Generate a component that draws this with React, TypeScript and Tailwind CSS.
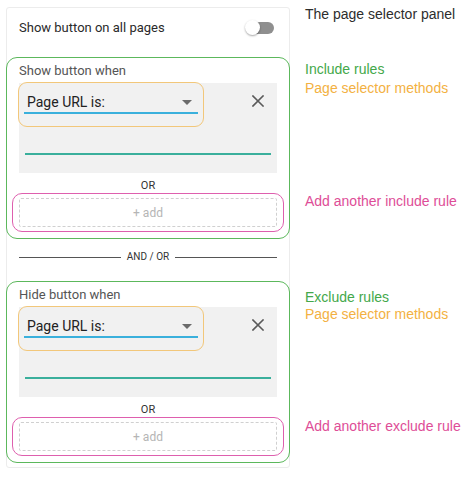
import React from "react";

const ui = { fontFamily: "Roboto, 'Liberation Sans', sans-serif" };
const lab = { fontFamily: "'Liberation Sans', Arial, sans-serif" };

function Caret() {
  return (
    <svg width="10" height="5" viewBox="0 0 10 5" className="shrink-0">
      <path d="M0 0 L10 0 L5 5 Z" fill="#6b6b6b" />
    </svg>
  );
}

function XIcon() {
  return (
    <svg width="12" height="12" viewBox="0 0 12 12">
      <path d="M1 1 L11 11 M11 1 L1 11" stroke="#5a5a5a" strokeWidth="1.6" strokeLinecap="square" />
    </svg>
  );
}

function RuleGroup({ title }: { title: string }) {
  return (
    <div className="-mx-px rounded-[11px] border-[1.5px] border-[#5cb85c] pt-[5px] pb-[6px]">
      <div className="pl-[12px] text-[13px] leading-[16px] text-[#555]">{title}</div>
      <div className="mx-[12px] mt-[4px] h-[90px] bg-[#f1f1f1] flex flex-col">
        <div className="flex items-start">
          <div className="-ml-px -mt-px w-[186px] h-[45px] rounded-[9px] border-[1.5px] border-[#f2c77a] px-[5px] pt-[9px]">
            <div className="flex items-center justify-between h-[20px] pl-[3px] pr-[6px]">
              <span className="text-[14px] text-[#222]">Page URL is:</span>
              <Caret />
            </div>
            <div className="h-[2px] bg-[#3ab0dc]" />
          </div>
          <div className="flex-1 flex justify-end pr-[13px] pt-[12px]">
            <XIcon />
          </div>
        </div>
        <div className="mx-[6px] mt-[26px] h-[1.5px] bg-[#3aaf9c]" />
      </div>
      <div className="text-center text-[11px] leading-[12px] text-[#333] mt-[7px]">OR</div>
      <div className="mx-[5px] mt-[1px] h-[39px] rounded-[10px] border-[1.5px] border-[#de5fae] px-[6px] py-[4px]">
        <div className="h-full border border-dashed border-[#d0d0d0] rounded-[2px] flex items-center justify-center text-[12px] text-[#b5b5b5]">
          + add
        </div>
      </div>
    </div>
  );
}

export default function App() {
  return (
    <div className="w-[474px] h-[479px] bg-white flex" style={ui}>
      <div className="ml-[6px] mt-[7px] w-[284px] h-[461px] border border-[#ececec] rounded-[3px] flex flex-col">
        <div className="h-[39px] flex items-center justify-between pl-[12px] pr-[15px]">
          <span className="text-[13px] text-[#2a2a2a]">Show button on all pages</span>
          <div className="relative w-[29px] h-[16px] flex items-center">
            <div className="ml-[3px] w-[26px] h-[12px] rounded-full bg-[#8f8f8f]" />
            <div className="absolute left-0 top-0 w-[15px] h-[15px] rounded-full bg-white shadow-[0_1px_2px_rgba(0,0,0,0.35)]" />
          </div>
        </div>
        <div className="mt-[10px]">
          <RuleGroup title="Show button when" />
        </div>
        <div className="mt-[12px] mx-[12px] flex items-center gap-[6px]">
          <div className="flex-1 h-px bg-[#555]" />
          <span className="text-[10px] text-[#333] leading-[12px]">AND / OR</span>
          <div className="flex-1 h-px bg-[#555]" />
        </div>
        <div className="mt-[18px]">
          <RuleGroup title="Hide button when" />
        </div>
      </div>
      <div className="ml-[15px] flex flex-col text-[14px] leading-[18px]" style={lab}>
        <div className="mt-[5px] text-[#2d2d2d]">The page selector panel</div>
        <div className="mt-[37px] text-[#43a84a]">Include rules</div>
        <div className="mt-[1px] text-[#f3b142]">Page selector methods</div>
        <div className="mt-[95px] text-[#de4d97]">Add another include rule</div>
        <div className="mt-[78px] text-[#43a84a]">Exclude rules</div>
        <div className="mt-[-1px] text-[#f3b142]">Page selector methods</div>
        <div className="mt-[94px] text-[#de4d97]">Add another exclude rule</div>
      </div>
    </div>
  );
}
